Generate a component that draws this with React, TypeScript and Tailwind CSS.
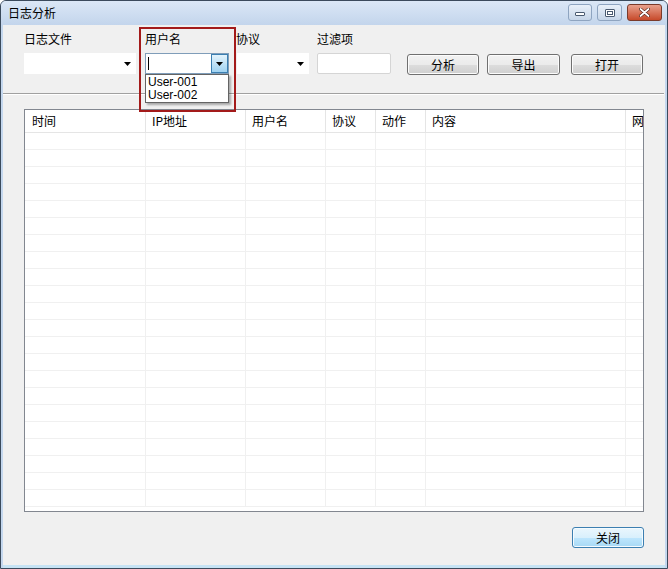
import React from "react";

const cjk = { fontFamily: '"Noto Sans CJK SC", "Liberation Sans", sans-serif' };
const latin = { fontFamily: '"Liberation Sans", "DejaVu Sans", sans-serif' };

const COLS = "grid-cols-[121px_100px_80px_50px_50px_200px_1fr]";
const HEADERS = ["时间", "IP地址", "用户名", "协议", "动作", "内容", "网络"];

function Arrow() {
  return (
    <svg width="7" height="4" viewBox="0 0 7 4">
      <path d="M0 0h7L3.5 4z" fill="#000" />
    </svg>
  );
}

function FlatCombo({ width }: { width: string }) {
  return (
    <div className={`${width} h-[21px] bg-white flex items-center justify-end pr-[5px]`}>
      <Arrow />
    </div>
  );
}

function WinButton({ label, className, primary }: { label: string; className: string; primary?: boolean }) {
  return (
    <button
      className={`${className} block h-[21px] rounded-[3px] border text-[12px] leading-none text-black ${
        primary
          ? "border-[#3c7fb1] bg-[linear-gradient(to_bottom,#eaf6fd_0%,#d9f0fc_50%,#bee6fd_51%,#a7d9f5_100%)] shadow-[inset_0_0_0_1px_#f4fbff]"
          : "border-[#707070] bg-[linear-gradient(to_bottom,#f2f2f2_0%,#ebebeb_50%,#dddddd_51%,#cfcfcf_100%)] shadow-[inset_0_0_0_1px_#fcfcfc]"
      }`}
      style={cjk}
    >
      {label}
    </button>
  );
}

export default function App() {
  const rows = Array.from({ length: 22 });

  return (
    <div className="w-[668px] h-[569px] flex flex-col border border-[#3b4a5c] rounded-t-[6px] bg-[#c4d7ee] overflow-hidden">
      {/* title bar */}
      <div className="h-[24px] flex items-center bg-[linear-gradient(to_bottom,#dbe7f6,#c3d5ec)]">
        <span className="ml-[7px] text-[12px] text-black" style={cjk}>
          日志分析
        </span>
        <div className="ml-auto mr-[5px] flex items-center gap-[5px] self-start mt-[3px]">
          <div className="w-[24px] h-[17px] rounded-[3px] border border-[#8ea4c0] bg-[linear-gradient(to_bottom,#e9f0f9,#c6d5e8)] flex items-end justify-center pb-[4px]">
            <div className="w-[10px] h-[4px] border border-[#4a5a70] bg-white rounded-[1px]" />
          </div>
          <div className="w-[25px] h-[17px] rounded-[3px] border border-[#8ea4c0] bg-[linear-gradient(to_bottom,#e9f0f9,#c6d5e8)] flex items-center justify-center">
            <div className="w-[10px] h-[8px] border border-[#4a5a70] bg-white rounded-[1px] flex items-center justify-center">
              <div className="w-[6px] h-[4px] border border-[#4a5a70]" />
            </div>
          </div>
          <div className="w-[35px] h-[17px] rounded-[3px] border border-[#7a3a2a] bg-[linear-gradient(to_bottom,#e9a08c,#c74a2b)] flex items-center justify-center">
            <svg width="11" height="9" viewBox="0 0 11 9">
              <path d="M1.5 1l8 7M9.5 1l-8 7" stroke="#4a1a10" strokeWidth="3" strokeLinecap="round" />
              <path d="M1.5 1l8 7M9.5 1l-8 7" stroke="#fff" strokeWidth="1.8" strokeLinecap="round" />
            </svg>
          </div>
        </div>
      </div>

      {/* body */}
      <div className="relative flex-1 mx-[2px] flex flex-col bg-[#f0f0f0]">
        {/* controls */}
        <div className="flex items-start pl-[21px] pt-[6px]">
          <div className="w-[112px] flex flex-col">
            <div className="h-[16px] text-[12px] leading-[16px] text-black" style={cjk}>日志文件</div>
            <div className="mt-[6px]">
              <FlatCombo width="w-[112px]" />
            </div>
          </div>

          <div className="relative ml-[9px] w-[84px] flex flex-col">
            <div className="h-[16px] text-[12px] leading-[16px] text-black" style={cjk}>用户名</div>
            <div className="mt-[6px] w-[84px] h-[21px] bg-white border border-[#7f9db9] flex items-stretch">
              <div className="flex-1 flex items-center pl-[2px]">
                <div className="w-px h-[13px] bg-black" />
              </div>
              <div className="w-[17px] border border-[#3c7fb1] bg-[linear-gradient(to_bottom,#e3f3fc,#9fd2f1)] flex items-center justify-center">
                <Arrow />
              </div>
            </div>
            {/* open list */}
            <div className="absolute left-0 top-[43px] w-[84px] h-[29px] bg-white border border-[#646464] shadow-[2px_2px_2px_rgba(0,0,0,0.3)] flex flex-col pt-[1px] pl-[2px] z-10" style={latin}>
              <div className="text-[12px] leading-[13px] text-black">User-001</div>
              <div className="text-[12px] leading-[13px] text-black">User-002</div>
            </div>
          </div>

          <div className="ml-[8px] w-[72px] flex flex-col">
            <div className="h-[16px] text-[12px] leading-[16px] text-black -ml-[1px]" style={cjk}>协议</div>
            <div className="mt-[6px]">
              <FlatCombo width="w-[72px]" />
            </div>
          </div>

          <div className="ml-[8px] w-[74px] flex flex-col">
            <div className="h-[16px] text-[12px] leading-[16px] text-black" style={cjk}>过滤项</div>
            <div className="mt-[6px] w-[74px] h-[21px] bg-white border border-[#d5d5d5] rounded-[2px]" />
          </div>

          <div className="ml-[16px] mt-[23px] flex items-start">
            <WinButton label="分析" className="w-[72px]" />
            <WinButton label="导出" className="ml-[8px] w-[73px]" />
            <WinButton label="打开" className="ml-[11px] w-[72px]" />
          </div>
        </div>

        {/* separator */}
        <div className="mt-[18px] mr-[1px] h-[2px] border-t border-[#a0a0a0] border-b border-b-white" />

        {/* table */}
        <div className="mt-[14px] ml-[21px] w-[620px] h-[403px] border border-[#828790] bg-white overflow-hidden">
          <div className={`grid ${COLS} h-[23px] border-b border-[#e5e5e5]`}>
            {HEADERS.map((h, i) => (
              <div
                key={h}
                className={`flex items-center overflow-hidden whitespace-nowrap text-[12px] text-black ${
                  i === 0 ? "pl-[7px]" : "pl-[6px]"
                } ${i < HEADERS.length - 1 ? "border-r border-[#e5e5e5]" : "pl-[3px]"}`}
                style={cjk}
              >
                {h}
              </div>
            ))}
          </div>
          {rows.map((_, r) => (
            <div key={r} className={`grid ${COLS} h-[17px] border-b border-[#f0f0f0]`}>
              {HEADERS.map((h, i) => (
                <div key={h} className={i < HEADERS.length - 1 ? "border-r border-[#f0f0f0]" : ""} />
              ))}
            </div>
          ))}
        </div>

        {/* footer */}
        <div className="mt-[15px] flex justify-end mr-[21px]">
          <WinButton label="关闭" className="w-[72px]" primary />
        </div>

        {/* annotation */}
        <div className="absolute left-[136px] top-[2px] w-[97px] h-[85px] border-2 border-[#a31a1a] z-20 pointer-events-none" />
      </div>

      {/* bottom frame */}
      <div className="h-[3px] mx-[2px] bg-[#c6e3f4]" />
    </div>
  );
}
